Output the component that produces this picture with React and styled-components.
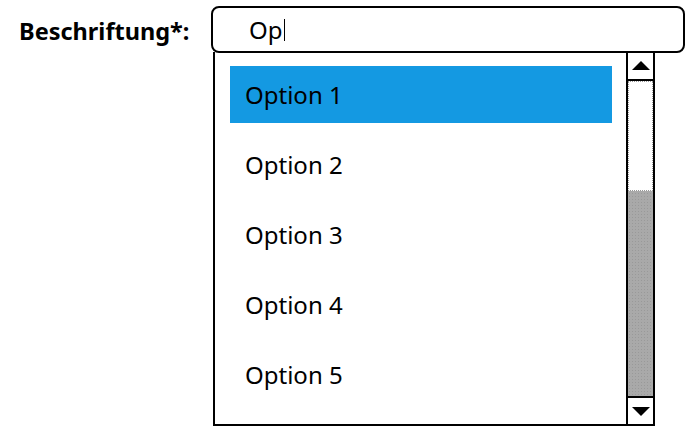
import styled, { createGlobalStyle } from 'styled-components';

const GlobalStyle = createGlobalStyle`
  body {
    margin: 0;
    background: #fff;
    font-family: "Noto Sans", "Liberation Sans", sans-serif;
    color: #000;
  }
`;

const Page = styled.div`
  width: 685px;
  height: 428px;
  display: flex;
  align-items: flex-start;
  padding: 6px 0 0 19px;
  box-sizing: border-box;
`;

const Label = styled.label`
  font-size: 23.5px;
  font-weight: 700;
  margin-top: 9px;
  width: 192px;
  white-space: nowrap;
`;

const Combo = styled.div`
  display: flex;
  flex-direction: column;
  width: 474px;
`;

const InputBox = styled.div`
  height: 47px;
  box-sizing: border-box;
  border: 2px solid #000;
  border-radius: 8px;
  display: flex;
  align-items: center;
  padding-left: 36px;
  font-size: 24px;
  position: relative;
  z-index: 1;
  background: #fff;
`;

const Caret = styled.span`
  display: inline-block;
  width: 1px;
  height: 22px;
  background: #000;
  margin-left: 1px;
`;

const Dropdown = styled.div`
  margin-left: 2px;
  margin-top: -1px;
  width: 442px;
  height: 374px;
  box-sizing: border-box;
  border-left: 2px solid #000;
  border-bottom: 2px solid #000;
  display: flex;
`;

const List = styled.ul`
  list-style: none;
  margin: 0;
  padding: 14px 0 0 15px;
  flex: 1;
  overflow: hidden;
`;

const Option = styled.li`
  height: 57px;
  width: 382px;
  margin-bottom: 13px;
  display: flex;
  align-items: center;
  padding-left: 15px;
  box-sizing: border-box;
  font-size: 24px;
  background: ${(p) => (p.$active ? '#1499e2' : 'transparent')};
`;

const Scrollbar = styled.div`
  width: 29px;
  box-sizing: border-box;
  border-left: 2px solid #000;
  border-right: 2px solid #000;
  display: flex;
  flex-direction: column;
`;

const ArrowButton = styled.div`
  height: ${(p) => (p.$down ? 28 : 29)}px;
  flex-shrink: 0;
  display: flex;
  align-items: center;
  justify-content: center;
  box-sizing: border-box;
  background: #fff;
  ${(p) => (p.$down ? 'border-top: 2px solid #000;' : 'border-bottom: 2px solid #000;')}
`;

const Track = styled.div`
  flex: 1;
  display: flex;
  flex-direction: column;
  background-color: #a9a9a9;
  background-image: radial-gradient(#999 0.6px, transparent 0.8px);
  background-size: 3px 3px;
`;

const Thumb = styled.div`
  height: 110px;
  background: #fff;
  border: 1px dotted #999;
  box-sizing: border-box;
`;

const Arrow = ({ down }) => (
  <svg width="18" height="9" viewBox="0 0 18 9">
    <polygon points={down ? '0,0 18,0 9,9' : '0,9 18,9 9,0'} fill="#000" />
  </svg>
);

const options = ['Option 1', 'Option 2', 'Option 3', 'Option 4', 'Option 5'];

export default function App() {
  return (
    <>
      <GlobalStyle />
      <Page>
        <Label>Beschriftung*:</Label>
        <Combo>
          <InputBox>
            Op<Caret />
          </InputBox>
          <Dropdown>
            <List>
              {options.map((o, i) => (
                <Option key={o} $active={i === 0}>
                  {o}
                </Option>
              ))}
            </List>
            <Scrollbar>
              <ArrowButton>
                <Arrow />
              </ArrowButton>
              <Track>
                <Thumb />
              </Track>
              <ArrowButton $down>
                <Arrow down />
              </ArrowButton>
            </Scrollbar>
          </Dropdown>
        </Combo>
      </Page>
    </>
  );
}
